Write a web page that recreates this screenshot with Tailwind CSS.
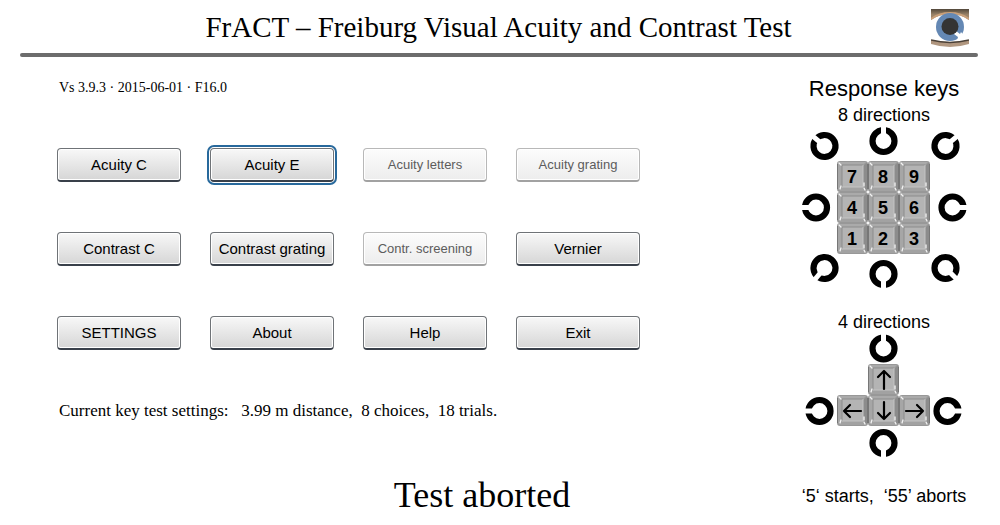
<!DOCTYPE html>
<html lang="en">
<head>
  <meta charset="UTF-8" />
  <meta name="viewport" content="width=device-width, initial-scale=1" />
  <title>FrACT – Freiburg Visual Acuity and Contrast Test</title>
  <script src="https://cdn.jsdelivr.net/npm/@tailwindcss/browser@4"></script>
</head>
<body class="bg-white text-black min-h-screen font-['Liberation_Serif',serif]">

  <header class="ml-5 mr-[22px]">
    <div class="h-[53px] flex items-start">
      <div class="w-[46px]"></div>
      <h1 class="flex-1 pt-[11px] text-center text-[29px] leading-8">FrACT – Freiburg Visual Acuity and Contrast Test</h1>
      <svg class="w-[38px] h-[38px] mt-[9px] mr-[9px]" viewBox="0 0 38 38" role="img" aria-label="Eye">
        <defs>
          <linearGradient id="lid" x1="0" y1="0" x2="0" y2="1">
            <stop offset="0" stop-color="#51473a" />
            <stop offset="0.15" stop-color="#9b8468" />
            <stop offset="0.6" stop-color="#a58a70" />
            <stop offset="1" stop-color="#b39a84" />
          </linearGradient>
        </defs>
        <path d="M0 0H38V35Q19 41 0 35Z" fill="url(#lid)" />
        <path d="M0 11Q8 5 19 5T38 11V31Q19 35 0 31Z" fill="#fff" />
        <path d="M0 10Q8 4 19 4T38 10" fill="none" stroke="#c9a07a" stroke-width="2" />
        <path d="M0 31Q19 36 38 31" fill="none" stroke="#4b4138" stroke-width="1.5" />
        <circle cx="19" cy="18" r="14" fill="#6488b4" />
        <path d="M25 22L23 25L27 28L26 32L34 28L30 23L29 25Z" fill="#fff" />
        <circle cx="19" cy="17.500" r="8.500" fill="#343434" />
      </svg>
    </div>
    <hr class="border-0 h-1 rounded-full bg-[#6c6c6c]" />
  </header>

  <div class="flex justify-between">
    <main class="flex-1">
      <p class="pl-[59px] pt-[22px] text-[14px] leading-[18px]">Vs 3.9.3 · 2015-06-01 · F16.0</p>

      <div class="ml-[57px] mt-[51px] grid grid-cols-[repeat(4,124px)] gap-x-[29px] gap-y-[50px] font-['Liberation_Sans',sans-serif] text-[15px]">
        <button class="h-[34px] pt-px rounded-[4px] border border-[#6f7377] border-b-2 border-b-[#39404a] bg-linear-to-b from-[#f8f8f8] to-[#d6d6d6] inset-ring inset-ring-white whitespace-nowrap">Acuity C</button>
        <button class="h-[34px] pt-px rounded-[4px] border border-[#6f7377] border-b-2 border-b-[#39404a] bg-linear-to-b from-[#f8f8f8] to-[#d6d6d6] inset-ring inset-ring-white whitespace-nowrap outline-2 outline-offset-1 outline-[#28699c]">Acuity E</button>
        <button disabled class="h-[34px] pt-px rounded-[4px] border border-[#b8b8b8] border-b-2 border-b-[#a2a2a2] bg-linear-to-b from-[#fcfcfc] to-[#ededed] inset-ring inset-ring-white whitespace-nowrap text-[13px] text-[#5c5c5c]">Acuity letters</button>
        <button disabled class="h-[34px] pt-px rounded-[4px] border border-[#b8b8b8] border-b-2 border-b-[#a2a2a2] bg-linear-to-b from-[#fcfcfc] to-[#ededed] inset-ring inset-ring-white whitespace-nowrap text-[13px] text-[#5c5c5c]">Acuity grating</button>

        <button class="h-[34px] pt-px rounded-[4px] border border-[#6f7377] border-b-2 border-b-[#39404a] bg-linear-to-b from-[#f8f8f8] to-[#d6d6d6] inset-ring inset-ring-white whitespace-nowrap">Contrast C</button>
        <button class="h-[34px] pt-px rounded-[4px] border border-[#6f7377] border-b-2 border-b-[#39404a] bg-linear-to-b from-[#f8f8f8] to-[#d6d6d6] inset-ring inset-ring-white whitespace-nowrap">Contrast grating</button>
        <button disabled class="h-[34px] pt-px rounded-[4px] border border-[#b8b8b8] border-b-2 border-b-[#a2a2a2] bg-linear-to-b from-[#fcfcfc] to-[#ededed] inset-ring inset-ring-white whitespace-nowrap text-[13px] text-[#5c5c5c]">Contr. screening</button>
        <button class="h-[34px] pt-px rounded-[4px] border border-[#6f7377] border-b-2 border-b-[#39404a] bg-linear-to-b from-[#f8f8f8] to-[#d6d6d6] inset-ring inset-ring-white whitespace-nowrap">Vernier</button>

        <button class="h-[34px] pt-px rounded-[4px] border border-[#6f7377] border-b-2 border-b-[#39404a] bg-linear-to-b from-[#f8f8f8] to-[#d6d6d6] inset-ring inset-ring-white whitespace-nowrap">SETTINGS</button>
        <button class="h-[34px] pt-px rounded-[4px] border border-[#6f7377] border-b-2 border-b-[#39404a] bg-linear-to-b from-[#f8f8f8] to-[#d6d6d6] inset-ring inset-ring-white whitespace-nowrap">About</button>
        <button class="h-[34px] pt-px rounded-[4px] border border-[#6f7377] border-b-2 border-b-[#39404a] bg-linear-to-b from-[#f8f8f8] to-[#d6d6d6] inset-ring inset-ring-white whitespace-nowrap">Help</button>
        <button class="h-[34px] pt-px rounded-[4px] border border-[#6f7377] border-b-2 border-b-[#39404a] bg-linear-to-b from-[#f8f8f8] to-[#d6d6d6] inset-ring inset-ring-white whitespace-nowrap">Exit</button>
      </div>

      <p class="pl-[59px] mt-[51px] text-[17px] leading-5 whitespace-pre">Current key test settings:   3.99 m distance,  8 choices,  18 trials.</p>
      <p class="pl-[164px] mt-[54px] text-center text-[36px] leading-10">Test aborted</p>
    </main>

    <aside class="w-[168px] mr-8 pt-5 flex flex-col items-center font-['Liberation_Sans',sans-serif] text-lg leading-6 whitespace-nowrap">
      <h2 class="text-[22px] leading-6">Response keys</h2>
      <h3 class="mt-0.5">8 directions</h3>

      <!-- viewBox starts at the left edge of the column -->
      <svg class="w-[168px] h-[162px]" viewBox="800 127 168 162" role="img" aria-label="Number pad keys for 8 directions">
        <defs>
          <g id="ring">
            <circle r="11" fill="none" stroke="#000" stroke-width="6.200" />
            <path d="M6 0H15" stroke="#fff" stroke-width="5" />
          </g>
          <g id="key">
            <rect width="31" height="31" rx="3" fill="#989898" />
            <path d="M2 1H29L25 5H6Z" fill="#aaa" />
            <path d="M1 2V29L5 26V5Z" fill="#a6a6a6" />
            <path d="M30 2V29L26 26V5Z" fill="#8c8c8c" />
            <path d="M2 30H29L26 26H5Z" fill="#a2a2a2" />
            <rect x="5" y="4" width="21" height="22" rx="1" fill="#b4b4b4" />
            <path d="M5 26V4H26" fill="none" stroke="#8c8c8c" />
            <path d="M5 26H26V4" fill="none" stroke="#c4c4c4" />
            <path d="M27 22V25M4 25L3 28M27 27L28 29M2 2L4 4" stroke="#f4f4f4" stroke-width="1.300" stroke-linecap="round" />
            <path d="M.5 3V28M30.500 3V28" stroke="#777" />
          </g>
        </defs>
        <use href="#ring" transform="translate(824.500 146) rotate(-140)" />
        <use href="#ring" transform="translate(883.500 141) rotate(-90)" />
        <use href="#ring" transform="translate(945.500 146) rotate(-40)" />
        <use href="#ring" transform="translate(816 207.500) rotate(180)" />
        <use href="#ring" transform="translate(952.500 207.500)" />
        <use href="#ring" transform="translate(824.500 268) rotate(130)" />
        <use href="#ring" transform="translate(883.500 274) rotate(90)" />
        <use href="#ring" transform="translate(945.500 268) rotate(45)" />
        <use href="#key" x="837" y="161" />
        <use href="#key" x="868" y="161" />
        <use href="#key" x="899" y="161" />
        <use href="#key" x="837" y="192" />
        <use href="#key" x="868" y="192" />
        <use href="#key" x="899" y="192" />
        <use href="#key" x="837" y="223" />
        <use href="#key" x="868" y="223" />
        <use href="#key" x="899" y="223" />
        <g font-size="18" font-weight="700" text-anchor="middle">
          <text x="852" y="183">7</text>
          <text x="883" y="183">8</text>
          <text x="914" y="183">9</text>
          <text x="852" y="214">4</text>
          <text x="883" y="214">5</text>
          <text x="914" y="214">6</text>
          <text x="852" y="245">1</text>
          <text x="883" y="245">2</text>
          <text x="914" y="245">3</text>
        </g>
      </svg>

      <h3 class="mt-[21px]">4 directions</h3>
      <svg class="w-[168px] h-[126px]" viewBox="800 334 168 126" role="img" aria-label="Arrow keys for 4 directions">
        <use href="#ring" transform="translate(883.500 348.500) rotate(-90)" />
        <use href="#ring" transform="translate(819.500 411) rotate(180)" />
        <use href="#ring" transform="translate(947.500 411)" />
        <use href="#ring" transform="translate(883.500 443) rotate(90)" />
        <use href="#key" x="868" y="364" />
        <use href="#key" x="837" y="395" />
        <use href="#key" x="868" y="395" />
        <use href="#key" x="899" y="395" />
        <g fill="none" stroke="#000" stroke-width="2.200" stroke-linecap="round" stroke-linejoin="round">
          <path d="M884 389V371M878 377L884 371L890 377" />
          <path d="M884 402V419M878 413L884 419L890 413" />
          <path d="M861 411H844M850 405L844 411L850 417" />
          <path d="M906 411H923M917 405L923 411L917 417" />
        </g>
      </svg>

      <p class="mt-6 whitespace-pre">‘5‘ starts,  ‘55’ aborts</p>
    </aside>
  </div>

</body>
</html>
